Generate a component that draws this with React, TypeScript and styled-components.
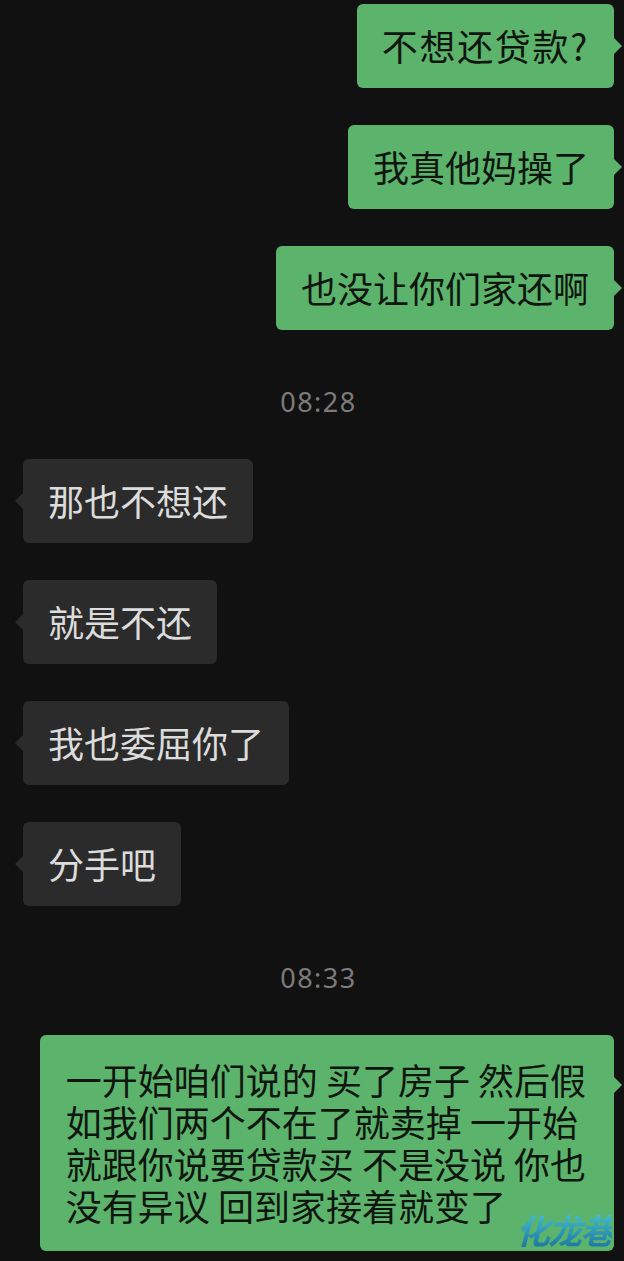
import React, { FC } from 'react'
import styled, { createGlobalStyle, css } from 'styled-components'

const GlobalStyle = createGlobalStyle`
	html, body {
		margin: 0;
		padding: 0;
		background: #111111;
		height: 1261px;
		overflow: hidden;
	}
	body {
		font-family: 'Noto Sans CJK SC', 'Noto Sans', sans-serif;
	}
`

const Chat = styled.div`
	display: flex;
	flex-direction: column;
	gap: 37px;
	padding: 4px 10px 0 23px;
`

const Row = styled.div<{ $mine: boolean }>`
	display: flex;
	justify-content: ${p => (p.$mine ? 'flex-end' : 'flex-start')};
`

const Bubble = styled.div<{ $mine: boolean; $multi?: boolean; $spacing?: number }>`
	position: relative;
	padding: ${p => (p.$multi ? '23px 28px 25px 26px' : '23px 25px 25px')};
	border-radius: 6px;
	font-size: 36px;
	line-height: ${p => (p.$multi ? '42px' : '36px')};
	letter-spacing: ${p => p.$spacing ?? 0}px;
	white-space: nowrap;
	background: ${p => (p.$mine ? '#5cb36b' : '#2b2b2b')};
	color: ${p => (p.$mine ? '#0f150f' : '#dcdcdc')};

	&::after {
		content: '';
		position: absolute;
		top: ${p => (p.$multi ? '42px' : '34px')};
		border-top: 8px solid transparent;
		border-bottom: 8px solid transparent;
		${p =>
			p.$mine
				? css`
						right: -8px;
						border-left: 8px solid #5cb36b;
				  `
				: css`
						left: -8px;
						border-right: 8px solid #2b2b2b;
				  `}
	}
`

const TimeStamp = styled.div`
	padding: 20px 0 5px;
	text-align: center;
	font-family: 'Noto Sans', 'Liberation Sans', sans-serif;
	font-size: 27px;
	line-height: 30px;
	letter-spacing: 1.5px;
	color: #7b7b7b;
`

const Watermark = styled.span`
	position: absolute;
	right: 2px;
	bottom: 4px;
	font-size: 34px;
	line-height: 34px;
	font-weight: 700;
	font-style: italic;
	letter-spacing: -2px;
	background: linear-gradient(180deg, #45bfd0 0%, #1c78a2 100%);
	-webkit-background-clip: text;
	background-clip: text;
	color: transparent;
`

interface IMessage {
	mine: boolean
	text: string
	spacing?: number
}

const before: IMessage[] = [
	{ mine: true, text: '不想还贷款?', spacing: 1.7 },
	{ mine: true, text: '我真他妈操了' },
	{ mine: true, text: '也没让你们家还啊' },
]

const middle: IMessage[] = [
	{ mine: false, text: '那也不想还' },
	{ mine: false, text: '就是不还' },
	{ mine: false, text: '我也委屈你了' },
	{ mine: false, text: '分手吧' },
]

const lastLines = ['一开始咱们说的 买了房子 然后假', '如我们两个不在了就卖掉 一开始', '就跟你说要贷款买 不是没说 你也', '没有异议 回到家接着就变了']

const Message: FC<IMessage> = ({ mine, text, spacing }) => (
	<Row $mine={mine}>
		<Bubble $mine={mine} $spacing={spacing}>
			{text}
		</Bubble>
	</Row>
)

const App: FC = () => (
	<>
		<GlobalStyle />
		<Chat>
			{before.map(m => (
				<Message key={m.text} {...m} />
			))}
			<TimeStamp>08:28</TimeStamp>
			{middle.map(m => (
				<Message key={m.text} {...m} />
			))}
			<TimeStamp>08:33</TimeStamp>
			<Row $mine>
				<Bubble $mine $multi>
					{lastLines.map((line, i) => (
						<React.Fragment key={i}>
							{line}
							{i < lastLines.length - 1 && <br />}
						</React.Fragment>
					))}
					<Watermark>化龙巷</Watermark>
				</Bubble>
			</Row>
		</Chat>
	</>
)

export default App
